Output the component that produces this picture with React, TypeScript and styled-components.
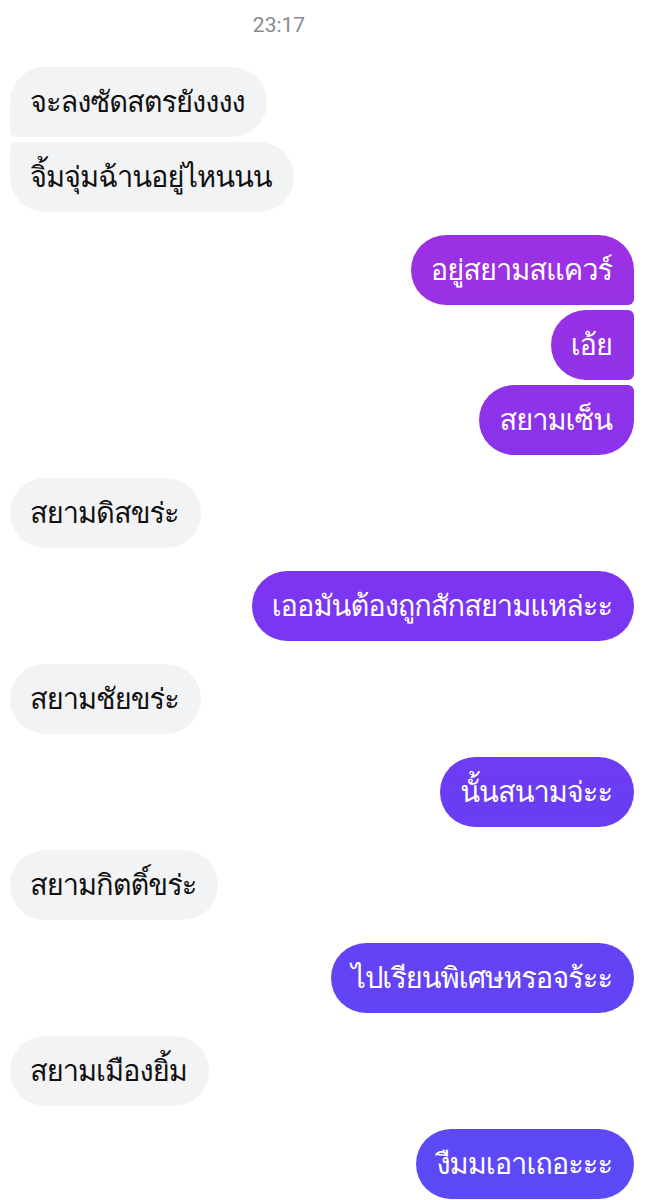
import styled, { createGlobalStyle, css } from "styled-components";

const GlobalStyle = createGlobalStyle`
    html, body {
        margin: 0;
        padding: 0;
        background: #ffffff;
    }
    body {
        font-family: "Loma", "Garuda", "Noto Sans Thai", "Noto Sans", "Liberation Sans", sans-serif;
    }
`;

type Pos = "single" | "first" | "middle" | "last";
type Side = "in" | "out";

interface IGroup {
    side: Side;
    messages: string[];
}

const groups: IGroup[] = [
    { side: "in", messages: ["จะลงซัดสตรยังงงง", "จิ้มจุ่มฉ้านอยู่ไหนนน"] },
    { side: "out", messages: ["อยู่สยามสแควร์", "เอ้ย", "สยามเซ็น"] },
    { side: "in", messages: ["สยามดิสขร่ะ"] },
    { side: "out", messages: ["เออมันต้องถูกสักสยามแหล่ะะ"] },
    { side: "in", messages: ["สยามชัยขร่ะ"] },
    { side: "out", messages: ["นั้นสนามจ่ะะ"] },
    { side: "in", messages: ["สยามกิตติ์ขร่ะ"] },
    { side: "out", messages: ["ไปเรียนพิเศษหรอจร้ะะ"] },
    { side: "in", messages: ["สยามเมืองยิ้ม"] },
    { side: "out", messages: ["งืมมเอาเถอะะะ"] },
];

const getPos = (index: number, total: number): Pos => {
    if (total === 1) return "single";
    if (index === 0) return "first";
    if (index === total - 1) return "last";
    return "middle";
};

const App = () => {
    return (
        <>
            <GlobalStyle />
            <Screen>
                <Time>23:17</Time>
                <Thread>
                    {groups.map((group, gi) => (
                        <Group key={gi} side={group.side}>
                            {group.messages.map((text, i) => (
                                <Bubble key={i} side={group.side} pos={getPos(i, group.messages.length)}>
                                    {text}
                                </Bubble>
                            ))}
                        </Group>
                    ))}
                </Thread>
            </Screen>
        </>
    );
};

export default App;

const Screen = styled.div`
    width: 648px;
    height: 1200px;
    overflow: hidden;
    background: #ffffff;
    display: flex;
    flex-direction: column;
`;

const Time = styled.div`
    text-align: center;
    font-family: "Roboto", "Liberation Sans", sans-serif;
    font-size: 21px;
    color: #8a8a8f;
    padding-top: 13px;
    height: 56px;
    box-sizing: border-box;
    margin-left: -90px;
`;

const Thread = styled.div`
    display: flex;
    flex-direction: column;
    gap: 23px;
    padding: 11px 14px 0 10px;
`;

const Group = styled.div<{ side: Side }>`
    display: flex;
    flex-direction: column;
    gap: 5px;
    align-items: ${(props) => (props.side === "out" ? "flex-end" : "flex-start")};
`;

const BIG = "35px";
const SMALL = "6px";

const radius = (side: Side, pos: Pos) => {
    const top = pos === "single" || pos === "first" ? BIG : SMALL;
    const bottom = pos === "single" || pos === "last" ? BIG : SMALL;
    if (side === "out") return `${BIG} ${top} ${bottom} ${BIG}`;
    return `${top} ${BIG} ${BIG} ${bottom}`;
};

const Bubble = styled.div<{ side: Side; pos: Pos }>`
    display: flex;
    align-items: center;
    height: 70px;
    box-sizing: border-box;
    padding: 0 22px 0 20px;
    font-size: 29px;
    letter-spacing: -1px;
    white-space: nowrap;
    border-radius: ${(props) => radius(props.side, props.pos)};
    ${(props) =>
        props.side === "out"
            ? css`
                  color: #ffffff;
                  background: linear-gradient(
                      to bottom,
                      #a72ddb 0px,
                      #9a31e3 270px,
                      #7c35f1 600px,
                      #6a3df4 800px,
                      #5b4af6 1200px
                  );
                  background-attachment: fixed;
              `
            : css`
                  color: #111111;
                  background: #f2f3f5;
              `}
`;
